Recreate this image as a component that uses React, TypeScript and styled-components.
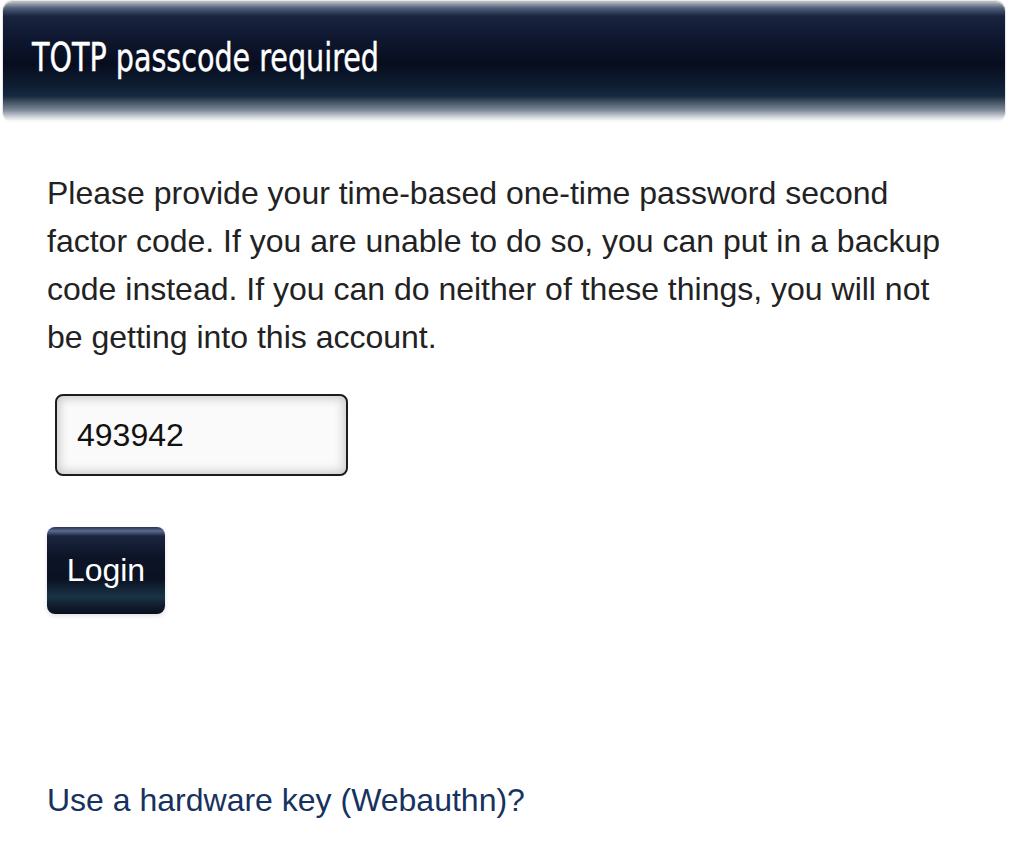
import React, { useState } from 'react'
import styled, { createGlobalStyle } from 'styled-components'

const GlobalStyle = createGlobalStyle`
  body {
    margin: 0;
    background: #ffffff;
    font-family: "Liberation Sans", Arial, sans-serif;
    color: #222222;
  }
`

const Page = styled.div`
  width: 1009px;
  height: 860px;
  overflow: hidden;
  background: #ffffff;
  padding-top: 2px;
  box-sizing: border-box;
`

const TitleBar = styled.header`
  margin: 0 4px 0 3px;
  height: 120px;
  border-radius: 9px;
  display: flex;
  align-items: center;
  padding: 0 0 10px 29px;
  box-sizing: border-box;
  background: linear-gradient(
    to bottom,
    #b4b9c0 0px,
    #52607a 6px,
    #1a2440 14px,
    #0f1830 35px,
    #070d1f 62px,
    #0d1c30 82px,
    #15293e 94px,
    #7c8896 108px,
    #dde0e4 116px,
    #ffffff 120px
  );
  box-shadow: 0 -1px 2px rgba(0, 0, 0, 0.35);
`

/* condensed title face: no narrow family installed, so squeeze DejaVu Condensed */
const Title = styled.h1`
  margin: 0;
  font-family: "DejaVu Sans Condensed", "DejaVu Sans", sans-serif;
  font-weight: 400;
  font-size: 39px;
  color: #ffffff;
  white-space: nowrap;
  transform: scaleX(0.815);
  transform-origin: left center;
  -webkit-text-stroke: 0.4px #ffffff;
`

const Content = styled.main`
  padding: 47px 0 0 47px;
  display: flex;
  flex-direction: column;
  align-items: flex-start;
`

const Intro = styled.p`
  margin: 0;
  width: 915px;
  font-size: 32px;
  line-height: 48px;
  color: #222222;
`

const CodeField = styled.input`
  margin: 33px 0 0 8px;
  width: 293px;
  height: 82px;
  box-sizing: border-box;
  border: 2px solid #1c1c1c;
  border-radius: 8px;
  padding: 0 0 0 20px;
  font-family: "Liberation Sans", Arial, sans-serif;
  font-size: 32px;
  color: #111111;
  caret-color: #000000;
  background: #fafafa;
  box-shadow: inset 0 0 10px 3px rgba(0, 0, 0, 0.18);
  outline: none;
`

const LoginButton = styled.button`
  margin-top: 51px;
  width: 118px;
  height: 87px;
  padding: 0;
  border: none;
  border-radius: 8px;
  font-family: "Liberation Sans", Arial, sans-serif;
  font-size: 32px;
  color: #ffffff;
  cursor: pointer;
  background: linear-gradient(
    to bottom,
    #2a3350 0px,
    #5b6a8e 4px,
    #1a2540 9px,
    #0d1426 30px,
    #0a1222 52px,
    #1b3347 70px,
    #0e1a2a 80px,
    #08101e 87px
  );
  box-shadow: 0 2px 4px rgba(0, 0, 0, 0.12);
`

const WebauthnLink = styled.a`
  margin-top: 162px;
  font-size: 32px;
  line-height: 48px;
  color: #17325e;
  text-decoration: none;
`

function App() {
  const [code, setCode] = useState('493942')

  return (
    <Page>
      <GlobalStyle />
      <TitleBar>
        <Title>TOTP passcode required</Title>
      </TitleBar>
      <Content>
        <Intro>
          Please provide your time-based one-time password second factor code. If you are
          unable to do so, you can put in a backup code instead. If you can do neither of
          these things, you will not be getting into this account.
        </Intro>
        <CodeField value={code} onChange={e => setCode(e.target.value)} autoFocus />
        <LoginButton>Login</LoginButton>
        <WebauthnLink href="#">Use a hardware key (Webauthn)?</WebauthnLink>
      </Content>
    </Page>
  )
}

export default App
